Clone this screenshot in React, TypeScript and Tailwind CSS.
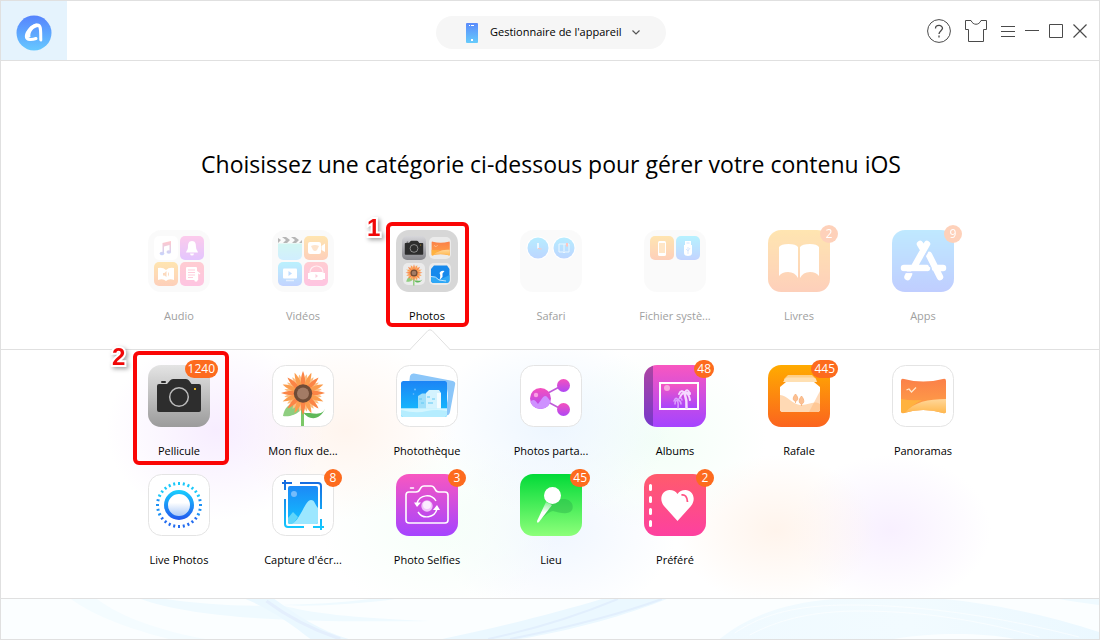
import type { ReactNode } from 'react';

type Stop = [string, string];

const PINK: Stop = ['#f857c0', '#a544ff'];
const ORANGE: Stop = ['#ffab00', '#fb641f'];
const BLUE: Stop = ['#1c84f5', '#14c3ff'];
const ROSE: Stop = ['#ff5b6c', '#fd40a0'];

function Grad({ id, c }: { id: string; c: Stop }) {
  return (
    <linearGradient id={id} x1="0" y1="0" x2="0" y2="1">
      <stop offset="0" stopColor={c[0]} />
      <stop offset="1" stopColor={c[1]} />
    </linearGradient>
  );
}

function Icon({ children }: { children: ReactNode }) {
  return (
    <svg viewBox="0 0 62 62" className="block size-[62px]" aria-hidden="true">
      {children}
    </svg>
  );
}

function Tile({ id, c }: { id: string; c: Stop }) {
  return (
    <>
      <defs>
        <Grad id={id} c={c} />
      </defs>
      <rect width="62" height="62" rx="13" fill={`url(#${id})`} />
    </>
  );
}

function WhiteTile() {
  return <rect x=".5" y=".5" width="61" height="61" rx="13" fill="#fff" stroke="#e4e4e4" />;
}

function Folder({ fill = '#f0f0f0' }: { fill?: string }) {
  return <rect width="62" height="62" rx="13" fill={fill} />;
}

function Mini({ id, c, x, y }: { id: string; c: Stop; x: number; y: number }) {
  return (
    <>
      <defs>
        <Grad id={id} c={c} />
      </defs>
      <rect x={x} y={y} width="24" height="24" rx="5" fill={`url(#${id})`} />
    </>
  );
}

function Sunflower() {
  const outer = Array.from({ length: 16 }, (_, i) => i * 22.5);
  return (
    <g>
      <path d="M30.500 40V61" stroke="#7cc868" strokeWidth="3" />
      <path d="M30 43C25 51 15 52 11 51C12 45 15 40 20 39Z" fill="#8fce80" />
      <path d="M31 47C36 55 48 57 54 42C51 50 45 49 38 48C34 48 32 48 31 47Z" fill="#5fb95a" />
      {outer.map((a) => (
        <path key={a} d="M31 29C28 20 29 12 31 9C33 12 34 20 31 29Z" fill="#fdc083" transform={`rotate(${a + 11} 31 28)`} />
      ))}
      {outer.map((a, i) => (
        <path key={a} d="M31 28C27.200 19 29 11 31 6C33 11 34.800 19 31 28Z" fill={i % 2 ? '#fb9d4e' : '#fb8546'} transform={`rotate(${a} 31 28)`} />
      ))}
      <circle cx="31" cy="28.500" r="9.200" fill="#704c37" />
      <circle cx="31" cy="28.500" r="6" fill="#a37b65" />
    </g>
  );
}

function CameraShape() {
  return (
    <g>
      <path d="M9 21Q9 19 11 19H19L22 15.500Q23 14 25 14H38Q40 14 41 15.500L43.500 19H51Q53 19 53 21V45Q53 47 51 47H11Q9 47 9 45Z" fill="#2d2d2d" />
      <rect x="13" y="16" width="5" height="2" rx="1" fill="#2d2d2d" />
      <circle cx="31" cy="32" r="9.300" fill="none" stroke="#bcbcbc" strokeWidth="1.500" />
      <rect x="46" y="23" width="2" height="2" fill="#e8b521" />
    </g>
  );
}

function PanoramaShape({ id }: { id: string }) {
  return (
    <g>
      <defs>
        <Grad id={id} c={['#fb8049', '#ffa547']} />
        <Grad id={id + 'd'} c={['#ffd79a', '#ffb84e']} />
      </defs>
      <path d="M9 16Q9 13 12 14Q31 19 51 14Q54 13 54 16V46Q54 49 51 48Q31 42 12 48Q9 49 9 46Z" fill={`url(#${id})`} />
      <path d="M9 34Q19 36 30 35Q20 40 13 47.700Q9 49 9 46Z" fill="#ffb23f" />
      <path d="M13 47.700C22 37 36 34 54 34V46Q54 49 51 48Q31 42 13 47.700Z" fill={`url(#${id}d)`} />
      <path d="M14.500 25L17 24L19.500 27L24 22.500" fill="none" stroke="#ffe7cb" strokeWidth="1.200" />
    </g>
  );
}

function AudioIcon() {
  return (
    <Icon>
      <Folder />
      <rect x="6" y="6" width="24" height="24" rx="5" fill="#fff" />
      <defs>
        <linearGradient id="note" gradientUnits="userSpaceOnUse" x1="0" y1="12" x2="0" y2="25">
          <stop offset="0" stopColor="#ff4c60" />
          <stop offset="1" stopColor="#4b74f8" />
        </linearGradient>
      </defs>
      <g fill="url(#note)">
        <path d="M14.500 13L23 11V22H21.500V15L16 16.500V24H14.500Z" />
        <ellipse cx="14" cy="23.500" rx="2.300" ry="1.800" />
        <ellipse cx="20.800" cy="22" rx="2.300" ry="1.800" />
      </g>
      <Mini id="bell" c={PINK} x={32} y={6} />
      <path d="M44 11C40.500 11 40 14 40 17C40 20 38 21 38 22.500H50C50 21 48 20 48 17C48 14 47.500 11 44 11ZM42 23.500A2 2 0 0 0 46 23.500Z" fill="#fff" />
      <Mini id="abook" c={ORANGE} x={6} y={32} />
      <path d="M10 38Q15 37 18 40Q21 37 26 38V50Q21 48 18 51Q15 48 10 50Z" fill="#fff" />
      <path d="M15 43H16.500L18.500 41V47L16.500 45.500H15ZM20 42Q22 44 20 46.500Z" fill="#f8872c" />
      <Mini id="list" c={ROSE} x={32} y={32} />
      <rect x="38" y="37" width="11" height="13" rx="1" fill="#fff" />
      <path d="M40 40H47M40 42.500H47M40 45H47M40 47.500H45" stroke="#ff5c8d" />
      <path d="M49.500 50V42L52 44" fill="none" stroke="#fff" strokeWidth="1.300" />
      <circle cx="48" cy="50" r="1.700" fill="#fff" />
    </Icon>
  );
}

function VideoIcon() {
  return (
    <Icon>
      <Folder />
      <Mini id="clap" c={['#6ef0c5', '#6bc9ff']} x={6} y={6} />
      <path d="M6 6H30V13.500H6Z" fill="#f0f0f0" />
      <path d="M6 8L9 10L6 13ZM10 7H14L18 10L15 13H11L14 10ZM19 7H23L27 10L24 13H20L23 10ZM30 10L27 13H30Z" fill="#111" />
      <Mini id="cam" c={ORANGE} x={32} y={6} />
      <rect x="36" y="12" width="13" height="12" rx="2" fill="#fff" />
      <path d="M49.500 16L53 13.500V22L49.500 20Z" fill="#fff" />
      <path d="M39 16Q43 14 47 16L45 20Q43 22 41 20Z" fill="#fba75c" />
      <Mini id="tv" c={['#1fd3fb', '#3b72ff']} x={6} y={32} />
      <rect x="11" y="38.500" width="14" height="10" rx="1" fill="#fff" />
      <path d="M16.500 41V46L20 43.500Z" fill="#3290ff" />
      <path d="M14 50.500H22" stroke="#fff" strokeWidth="1.500" opacity=".6" />
      <Mini id="headset" c={ROSE} x={32} y={32} />
      <path d="M38 44V42A6.500 6 0 0 1 51 42V44" fill="none" stroke="#fff" strokeWidth="1.200" opacity=".7" />
      <rect x="38" y="42" width="13" height="8" rx="1" fill="#fff" />
      <path d="M37 43V49M52 43V49" stroke="#fff" strokeWidth="2" />
      <path d="M43.500 44V48L46 46Z" fill="#f75c8d" />
    </Icon>
  );
}

function PhotosIcon() {
  return (
    <Icon>
      <Folder fill="#d7d7d7" />
      <Mini id="pc" c={['#d6d6da', '#86868b']} x={6} y={6} />
      <svg x="5" y="5" width="26" height="26" viewBox="0 0 62 62">
        <CameraShape />
      </svg>
      <rect x="33" y="7" width="22" height="22" rx="5" fill="#ebebeb" />
      <svg x="32" y="6" width="25" height="25" viewBox="0 0 62 62">
        <PanoramaShape id="pano1" />
      </svg>
      <rect x="7" y="33" width="22" height="22" rx="5" fill="#ebebeb" />
      <svg x="5" y="32" width="26" height="24" viewBox="0 0 62 62">
        <Sunflower />
      </svg>
      <rect x="33" y="33" width="22" height="22" rx="5" fill="#ebebeb" />
      <path d="M38 35.500H51L53.500 39V50Q53.500 53 50 53H38Q35 53 35 50V39Z" fill="#1689ec" />
      <path d="M35 46Q40 46 43 49.500Q48 48 53.500 45V50Q53.500 53 50 53H38Q35 53 35 50Z" fill="#2fa8f6" />
      <path d="M43.500 43Q45 40 48.500 41L46.500 43.500L46.500 47L43.500 50Q45 45 43.500 43Z" fill="#fff" />
      <path d="M35 46.500Q40 46 43 50L50 51" fill="none" stroke="#dff3ff" strokeWidth=".8" />
    </Icon>
  );
}

function SafariIcon() {
  return (
    <Icon>
      <Folder />
      <defs>
        <Grad id="saf" c={['#12c4ff', '#2878ff']} />
      </defs>
      <circle cx="18" cy="18" r="11.500" fill="#fff" />
      <circle cx="44" cy="18" r="11.500" fill="#fff" />
      <circle cx="18" cy="18" r="10.500" fill="url(#saf)" />
      <circle cx="44" cy="18" r="10.500" fill="url(#saf)" />
      <path d="M18 13V18.500" stroke="#fff" strokeWidth="1.500" />
      <path d="M18 18.500L21.500 19" stroke="#f43" strokeWidth="1.200" />
      <path d="M39 14H49V22H45L44 23L43 22H39ZM44 14V22" fill="none" stroke="#bfe6ff" />
      <path d="M46 13H48V17L47 16L46 17Z" fill="#f43" />
    </Icon>
  );
}

function FilesIcon() {
  return (
    <Icon>
      <Folder />
      <Mini id="ph" c={ORANGE} x={6} y={6} />
      <rect x="14" y="11" width="8" height="15" rx="1.500" fill="#fff" />
      <rect x="15" y="13" width="6" height="10" fill="#ffad4a" />
      <Mini id="usb" c={['#12d5ff', '#3b72ff']} x={32} y={6} />
      <path d="M41 11H47V15H48V23Q48 26 44 26Q40 26 40 23V15H41Z" fill="#fff" />
      <path d="M44 17V24M42 19L44 21L46 18" fill="none" stroke="#6ea6ff" strokeWidth=".8" />
      <path d="M42.500 13H45.500" stroke="#6ea6ff" />
    </Icon>
  );
}

function BooksIcon() {
  return (
    <Icon>
      <Tile id="books" c={ORANGE} />
      <path d="M11 17Q13 14 20.500 14Q28 14 30 17V48Q27 42 20 42Q14 42 11 46ZM51 17Q49 14 42 14Q34 14 32 17V48Q35 42 42 42Q48 42 51 46Z" fill="#fff" />
    </Icon>
  );
}

function AppsIcon() {
  return (
    <Icon>
      <Tile id="apps" c={['#2db8ff', '#315eff']} />
      <g stroke="#fff" strokeWidth="6.500" strokeLinecap="round" fill="none">
        <path d="M28 14L31 19M35 14L22 37M37 25L48 47M12 38H35M43 38H51M17 44L15.500 47" />
      </g>
      <path d="M35.500 22L32.500 27L38 37" fill="none" stroke="#3c86ff" strokeWidth="1.500" />
      <path d="M9 42.300H35" stroke="#3870ff" strokeWidth="1.500" />
    </Icon>
  );
}

function CameraRollIcon() {
  return (
    <Icon>
      <Tile id="roll" c={['#e4e4e4', '#9b9b9b']} />
      <CameraShape />
    </Icon>
  );
}

function StreamIcon() {
  return (
    <Icon>
      <WhiteTile />
      <Sunflower />
    </Icon>
  );
}

function LibraryIcon() {
  return (
    <Icon>
      <WhiteTile />
      <defs>
        <Grad id="lib" c={BLUE} />
      </defs>
      <path d="M14 11Q15 8 18 8.500L57 16Q60 17 59 20L54 47Q53 51 50 50L10 42Z" fill="#8bc6f9" />
      <rect x="5" y="16" width="46" height="36" rx="2.500" fill="url(#lib)" />
      <path d="M51 24Q53 31 51 38Z" fill="#e8f6ff" />
      <path d="M22 31L26 28.500H30V44H22Z" fill="#9fdffa" />
      <path d="M30 28L33 25H43L45 28V44H30Z" fill="#d4f3fe" />
      <path d="M41 28H45V44H41Z" fill="#f3fcff" />
      <path d="M31 32H34M36 34H39M32 38H37M23 34H26M25 38H28" stroke="#62c9f4" />
      <path d="M5 43.500H51V49.500Q51 52 48.500 52H7.500Q5 52 5 49.500Z" fill="#b5edff" />
      <path d="M5 43.500H51V46Q40 44 31 46Q20 49 5 45Z" fill="#d4f6ff" />
      <circle cx="19" cy="24.500" r="1" fill="#6ebefc" />
      <circle cx="17.500" cy="29" r=".8" fill="#6ebefc" />
    </Icon>
  );
}

function SharedIcon() {
  return (
    <Icon>
      <WhiteTile />
      <defs>
        <Grad id="share" c={['#f550bd', '#ae48f5']} />
        <clipPath id="shareClip">
          <circle cx="20.500" cy="33.500" r="10.500" />
        </clipPath>
      </defs>
      <path d="M28 28L43 20M28 37L43 45" stroke="#bf5bd8" strokeWidth="1.500" />
      <circle cx="20.500" cy="33.500" r="10.500" fill="url(#share)" />
      <circle cx="43.500" cy="20.500" r="6.500" fill="url(#share)" />
      <circle cx="43.500" cy="44.500" r="6.500" fill="url(#share)" />
      <g clipPath="url(#shareClip)">
        <path d="M9 38Q13 33 15.500 36L18 39L21 35Q25 28 28 33L31 37V45H9Z" fill="#ce91ff" />
      </g>
      <circle cx="16" cy="30" r="2.200" fill="#f8a0e4" />
    </Icon>
  );
}

function AlbumsIcon() {
  return (
    <Icon>
      <Tile id="alb" c={PINK} />
      <path d="M9 .7V61.300Q0 58 0 49V13Q0 4 9 .7Z" fill="#20246a" opacity=".35" />
      <rect x="16" y="18" width="38" height="26" fill="url(#alb)" stroke="#fff" strokeWidth="2" />
      <circle cx="23" cy="23" r="3" fill="#f9a5df" />
      <g stroke="#f5d9ff" fill="none" strokeLinecap="round">
        <path d="M42.500 43Q43 35 40.500 28" strokeWidth="2.500" />
        <path d="M35 29Q37 24 41 28Q43 22 46 29M36 33Q37 28 41 28Q45 28 46 35M38 26L41 28L46 28" strokeWidth="2" />
      </g>
      <g stroke="#dca0ff" fill="none" strokeLinecap="round">
        <path d="M34 43Q34.500 38 33.500 36" strokeWidth="1.500" />
        <path d="M30 36Q32 31 34 35Q37 31 38 35M31 39Q31 35 34 35Q37 36 37 39" strokeWidth="1.500" />
      </g>
    </Icon>
  );
}

function BurstIcon() {
  return (
    <Icon>
      <Tile id="burst" c={ORANGE} />
      <path d="M20 10H44L48 14V17H16V14Z" fill="#ffcf87" />
      <path d="M17 14Q18 12.500 20 12.500H45Q47 12.500 48 14L49 17H15Z" fill="#ffe0b2" />
      <path d="M12 22L18 17H46L52 22V44Q52 47 49 47H15Q12 47 12 44Z" fill="#fff" />
      <path d="M12 30C19 30 24 39 32 40C40 41 45 35 52 39V44Q52 47 49 47H15Q12 47 12 44Z" fill="#ffd9b4" />
      <path d="M52 26V44Q52 47 49 47H41Z" fill="#ffb777" opacity=".5" />
      <g fill="#fcc092" stroke="#f5ad77" strokeWidth=".8">
        <path d="M27.500 29C24 33 25 36 27.500 36C30 36 31 33 27.500 29ZM27.500 36V38" />
        <path d="M33.500 31C30 35 31 39 33.500 39C36 39 37 35 33.500 31ZM33.500 39V41" />
      </g>
    </Icon>
  );
}

function PanoramaIcon() {
  return (
    <Icon>
      <WhiteTile />
      <PanoramaShape id="pano2" />
    </Icon>
  );
}

function LiveIcon() {
  return (
    <Icon>
      <WhiteTile />
      <defs>
        <linearGradient id="live" gradientUnits="userSpaceOnUse" x1="0" y1="16" x2="0" y2="46">
          <stop offset="0" stopColor="#17cfff" />
          <stop offset="1" stopColor="#2357ee" />
        </linearGradient>
        <linearGradient id="core" x1="0" y1="0" x2="0" y2="1">
          <stop offset=".4" stopColor="#fff" />
          <stop offset="1" stopColor="#a9c8f6" />
        </linearGradient>
      </defs>
      {Array.from({ length: 28 }, (_, i) => (
        <path key={i} d="M30 8H32V11H30Z" fill={i < 6 || i > 22 ? '#19c8fa' : i < 10 || i > 18 ? '#1c91f5' : '#236cf0'} transform={`rotate(${(i * 360) / 28} 31 31)`} />
      ))}
      <circle cx="31" cy="31" r="11.500" fill="url(#core)" />
      <circle cx="31" cy="31" r="13" fill="none" stroke="url(#live)" strokeWidth="4" />
    </Icon>
  );
}

function ScreenshotIcon() {
  return (
    <Icon>
      <WhiteTile />
      <defs>
        <linearGradient id="crop" gradientUnits="userSpaceOnUse" x1="0" y1="6" x2="0" y2="55">
          <stop offset="0" stopColor="#1768df" />
          <stop offset="1" stopColor="#13c9ff" />
        </linearGradient>
        <Grad id="shot" c={['#1c89f6', '#12c0ff']} />
      </defs>
      <rect x="16" y="12" width="30" height="38" rx="2" fill="url(#shot)" />
      <path d="M16 44L21 38L26 43L21 50H18Q16 50 16 48Z" fill="#5fd5fa" />
      <path d="M20 50C29 45 33 26 39 26C43 26 43 31 46 34V48Q46 50 44 50Z" fill="#9ce7ff" />
      <circle cx="22" cy="20" r="3" fill="#75bcfb" />
      <g stroke="url(#crop)" strokeWidth="2" fill="none">
        <path d="M10 9H20M13 6V16M28 9H46Q49 9 49 12V35M13 25V50Q13 53 16 53H32M41 53H52M49 45V56" />
      </g>
    </Icon>
  );
}

function SelfieIcon() {
  return (
    <Icon>
      <Tile id="self" c={PINK} />
      <path d="M10 21Q10 18 13 18H20Q23 18 24 15L25 13.500Q26 12 28 12H35Q37 12 38 13.500L39 15Q40 18 43 18H49Q52 18 52 21V46Q52 49 49 49H13Q10 49 10 46Z" fill="none" stroke="#fff" strokeWidth="1.600" />
      <path d="M14.500 14H17.500" stroke="#fff" strokeWidth="1.500" strokeLinecap="round" />
      <g fill="none" stroke="#fff" strokeWidth="1.400">
        <path d="M21 29A10.500 10.500 0 0 1 40 27M41 35A10.500 10.500 0 0 1 22 38" />
      </g>
      <path d="M18 28.500L25 28.500L21 33ZM37 36H44L41 31Z" fill="#fff" />
      <circle cx="31" cy="32" r="5.700" fill="#f1c4fb" />
      <circle cx="31" cy="31" r="4" fill="#fff" opacity=".7" />
    </Icon>
  );
}

function PlacesIcon() {
  return (
    <Icon>
      <defs>
        <linearGradient id="needle" x1="0" y1="0" x2="0" y2="1">
          <stop offset="0" stopColor="#fff" stopOpacity=".35" />
          <stop offset=".5" stopColor="#fff" />
        </linearGradient>
      </defs>
      <Tile id="place" c={['#02da38', '#8dff7a']} />
      <path d="M17.500 48C24 36 33 24 45 25C52 26 54 32 52 36C49 41 40 39 33 37C28 38 23 44 17.500 48Z" fill="#29a948" opacity=".4" />
      <path d="M26 28L32 31L19 48Q17 50 17 47Z" fill="url(#needle)" />
      <circle cx="32.500" cy="21.500" r="8.500" fill="#fff" />
    </Icon>
  );
}

function FavoriteIcon() {
  return (
    <Icon>
      <Tile id="fav" c={ROSE} />
      <path d="M6.500 11.500V15.500M6.500 23.500V27.500M6.500 35.500V39.500M6.500 47.500V51.500" stroke="#fff" strokeWidth="3" strokeLinecap="round" />
      <path d="M33.500 47L20 32C14 24 19 16 25.500 16Q31 16 33.500 20Q36 16 41.500 16C48 16 53 24 47 32Z" fill="#fff" />
      <path d="M37.500 21Q43 20 43.500 28" fill="none" stroke="#ff5483" strokeWidth="1.800" />
    </Icon>
  );
}

type Item = { label: string; icon: ReactNode; badge?: string; active?: boolean; mark?: ReactNode };

function Badge({ text }: { text: string }) {
  return (
    <span className="absolute -top-[5px] -right-2 flex h-[18px] min-w-[18px] items-center justify-center rounded-full bg-[#fd6b1e] px-[3px] text-xs text-white">
      {text}
    </span>
  );
}

function Entry({ item, faded }: { item: Item; faded?: boolean }) {
  return (
    <li className="relative flex justify-center">
      <button type="button" className="flex flex-col items-center gap-4">
        <span className={faded ? 'relative opacity-30' : 'relative'}>
          {item.icon}
          {item.badge && <Badge text={item.badge} />}
        </span>
        <span className={faded ? 'text-[11px] leading-4 text-[#a0a0a0]' : 'text-[11px] leading-4 text-black'}>{item.label}</span>
      </button>
      {item.mark}
    </li>
  );
}

const numberClass =
  "absolute font-['Liberation_Sans',sans-serif] text-2xl leading-6 font-bold text-[#f00808] [paint-order:stroke_fill] [-webkit-text-stroke:4px_white] drop-shadow-[2px_2px_2px_rgba(0,0,0,0.35)]";

const markPhotos = (
  <>
    <span className="pointer-events-none absolute -top-2 left-[21px] h-[105px] w-[83px] rounded-md border-4 border-[#fa0505]" />
    <span className={`${numberClass} -top-3.5 left-0.5`}>1</span>
    <svg viewBox="0 0 40 22" className="absolute top-[99px] left-[45px] h-[22px] w-10" aria-hidden="true">
      <path d="M0 21L18 1.500Q20 0 22 1.500L40 21V22H0Z" fill="#fff" />
      <path d="M0 20.500L18 1.500Q20 0 22 1.500L40 20.500" fill="none" stroke="#e0e0e0" />
    </svg>
  </>
);

const markRoll = (
  <>
    <span className="pointer-events-none absolute -top-3.5 left-4 h-[114px] w-24 rounded-md border-4 border-[#fa0505]" />
    <span className={`${numberClass} -top-5 -left-[5px]`}>2</span>
  </>
);

const categories: Item[] = [
  { label: 'Audio', icon: <AudioIcon /> },
  { label: 'Vidéos', icon: <VideoIcon /> },
  { label: 'Photos', icon: <PhotosIcon />, active: true, mark: markPhotos },
  { label: 'Safari', icon: <SafariIcon /> },
  { label: 'Fichier systè...', icon: <FilesIcon /> },
  { label: 'Livres', icon: <BooksIcon />, badge: '2' },
  { label: 'Apps', icon: <AppsIcon />, badge: '9' },
];

const albums: Item[] = [
  { label: 'Pellicule', icon: <CameraRollIcon />, badge: '1240', mark: markRoll },
  { label: 'Mon flux de...', icon: <StreamIcon /> },
  { label: 'Photothèque', icon: <LibraryIcon /> },
  { label: 'Photos parta...', icon: <SharedIcon /> },
  { label: 'Albums', icon: <AlbumsIcon />, badge: '48' },
  { label: 'Rafale', icon: <BurstIcon />, badge: '445' },
  { label: 'Panoramas', icon: <PanoramaIcon /> },
  { label: 'Live Photos', icon: <LiveIcon /> },
  { label: "Capture d'écr...", icon: <ScreenshotIcon />, badge: '8' },
  { label: 'Photo Selfies', icon: <SelfieIcon />, badge: '3' },
  { label: 'Lieu', icon: <PlacesIcon />, badge: '45' },
  { label: 'Préféré', icon: <FavoriteIcon />, badge: '2' },
];

function Header() {
  return (
    <header className="grid h-[60px] shrink-0 grid-cols-[1fr_auto_1fr] items-center border-b border-[#e0e0e0]">
      <a href="#accueil" aria-label="Accueil" className="flex h-full w-[66px] items-center justify-center bg-[#e5f3fd] pt-1">
        <svg viewBox="0 0 36 36" className="size-9" aria-hidden="true">
          <defs>
            <Grad id="logo" c={['#5683fd', '#66c8ff']} />
          </defs>
          <circle cx="18" cy="18" r="17.500" fill="url(#logo)" />
          <path d="M20 23.500C16 25 11 25 10.500 22.500C9.500 19 15 10 21.500 10C25.500 10 24.500 17 24.800 25" fill="none" stroke="#fff" strokeWidth="3" strokeLinecap="round" strokeLinejoin="round" />
          <path d="M10 24C9 17 15 8.500 21 8.500L23 12C17 12 13.500 18 14.500 22Z" fill="#fff" />
        </svg>
      </a>
      <label className="mt-1 ml-0.5 flex h-[33px] w-[230px] items-center rounded-full bg-[#f6f6f6] pl-[29px] text-[11px]">
        <svg viewBox="0 0 14 20" className="h-5 w-3.5 shrink-0" aria-hidden="true">
          <defs>
            <Grad id="dev" c={['#5b8bfb', '#66cbfc']} />
          </defs>
          <rect x="1" width="12" height="20" rx="1" fill="url(#dev)" />
          <path d="M4 2.500H5M6 2.500H9" stroke="#fff" />
          <rect x="6" y="16" width="2" height="2" fill="#fff" />
        </svg>
        <select aria-label="Mode" className="ml-[11px] appearance-none bg-transparent text-[11px] outline-none [field-sizing:content]">
          <option>Gestionnaire de l'appareil</option>
        </select>
        <svg viewBox="0 0 8 5" className="pointer-events-none ml-2.5 h-[5px] w-2 shrink-0" aria-hidden="true">
          <path d="M.5 .5L4 4L7.500 .5" fill="none" stroke="#555" strokeWidth="1.200" />
        </svg>
      </label>
      <div className="flex items-center justify-end gap-2.5 pr-3 text-[#4a4a4a]">
        <button type="button" aria-label="Aide" className="mr-1">
          <svg viewBox="0 0 24 24" className="size-6" fill="none" stroke="currentColor">
            <circle cx="12" cy="12" r="11.400" />
            <path d="M8.500 9.500C8.500 5.500 15.500 5.500 15.500 9.300C15.500 11.500 12 12 12 15M12 16.500V18.500" strokeWidth="1.300" />
          </svg>
        </button>
        <button type="button" aria-label="Apparence" className="mr-1">
          <svg viewBox="0 0 22 22" className="size-[22px]" fill="none" stroke="currentColor">
            <path d="M.5 .5H6C8 5.500 14 5.500 16 .5H21.500V9.500H18.500V21.500H3.500V9.500H.5Z" />
          </svg>
        </button>
        <button type="button" aria-label="Menu">
          <svg viewBox="0 0 14 14" className="size-3.5" stroke="currentColor">
            <path d="M0 2.500H14M0 7.500H14M0 12.500H14" />
          </svg>
        </button>
        <button type="button" aria-label="Réduire">
          <svg viewBox="0 0 14 14" className="size-3.5" stroke="currentColor">
            <path d="M0 6.500H14" />
          </svg>
        </button>
        <button type="button" aria-label="Agrandir">
          <svg viewBox="0 0 14 14" className="size-3.5" fill="none" stroke="currentColor">
            <path d="M.5 .5H13.500V13.500H.5Z" />
          </svg>
        </button>
        <button type="button" aria-label="Fermer">
          <svg viewBox="0 0 14 14" className="size-3.5" stroke="currentColor">
            <path d="M.5 .5L13.500 13.500M13.500 .5L.5 13.500" strokeWidth="1.200" />
          </svg>
        </button>
      </div>
    </header>
  );
}

function Waves() {
  return (
    <svg viewBox="0 0 1100 40" preserveAspectRatio="none" className="block h-10 w-full bg-[#fbfeff]" aria-hidden="true">
      <defs>
        <linearGradient id="w1" x1="0" y1="0" x2="1" y2="0">
          <stop offset="0" stopColor="#f0faff" />
          <stop offset=".5" stopColor="#f2fbff" />
          <stop offset="1" stopColor="#ebf8ff" />
        </linearGradient>
      </defs>
      <path d="M70 0H96C120 18 160 32 205 40H168C130 30 95 18 70 0Z" fill="#f4fcff" />
      <path d="M140 0C190 18 280 24 430 22C350 19 310 14 280 6C240 8 200 5 165 0Z" fill="#effaff" />
      <path d="M280 6C310 8 360 5 395 0H370C340 4 310 5 280 6Z" fill="#effaff" />
      <path d="M245 0H274C295 15 320 32 348 40H310C292 26 270 10 245 0Z" fill="#ebf8ff" />
      <path d="M266 2C290 20 316 32 340 40" fill="none" stroke="#e4effd" strokeWidth="3" />
      <path d="M602 0H667C630 15 570 32 520 40H442C500 28 555 14 602 0Z" fill="#ebf8ff" />
      <path d="M662 0C615 17 565 29 510 40M618 0C577 17 540 29 488 40" fill="none" stroke="#e2effd" strokeWidth="2" />
      <path d="M720 40C745 20 780 4 835 0H945C1000 5 1060 20 1100 33V40H1015C980 33 930 34 895 40Z" fill="url(#w1)" />
      <path d="M735 34C765 14 800 6 850 6C930 6 1010 20 1080 38M750 36C780 20 815 12 860 12C930 12 990 24 1040 38" fill="none" stroke="#fff" opacity=".6" />
      <path d="M1060 0H1100V6C1085 4 1070 2 1060 0Z" fill="#effaff" />
    </svg>
  );
}

export default function App() {
  return (
    <div className="flex min-h-screen flex-col border border-[#e0e0e0] bg-white font-['Open_Sans','Noto_Sans',sans-serif] text-black">
      <Header />
      <main className="flex flex-1 flex-col">
        <section className="border-b border-[#e0e0e0] pt-[87px] pb-[25px] pl-0.5">
          <h1 className="text-center text-[23px] leading-8">Choisissez une catégorie ci-dessous pour gérer votre contenu iOS</h1>
          <ul className="mx-auto mt-[50px] grid max-w-[868px] grid-cols-7">
            {categories.map((c) => (
              <Entry key={c.label} item={c} faded={!c.active} />
            ))}
          </ul>
        </section>
        <section className="flex-1 bg-[radial-gradient(ellipse_110px_90px_at_215px_80px,#f7edff,transparent),radial-gradient(ellipse_110px_90px_at_345px_80px,#fff5ee,transparent),radial-gradient(ellipse_120px_90px_at_550px_75px,#edf6ff,transparent),radial-gradient(ellipse_110px_90px_at_655px_90px,#f3fff7,transparent),radial-gradient(ellipse_120px_90px_at_440px_175px,#f6fff9,transparent),radial-gradient(ellipse_120px_90px_at_555px_180px,#f0f6ff,transparent),radial-gradient(ellipse_100px_75px_at_775px_180px,#fff4ec,transparent),radial-gradient(ellipse_100px_75px_at_890px_180px,#f8f0ff,transparent)] pt-[15px] pb-6 pl-0.5">
          <ul className="mx-auto grid max-w-[868px] grid-cols-7 gap-y-[15px]">
            {albums.map((a) => (
              <Entry key={a.label} item={a} />
            ))}
          </ul>
        </section>
      </main>
      <footer className="shrink-0 border-t border-[#e0e0e0]">
        <Waves />
      </footer>
    </div>
  );
}
